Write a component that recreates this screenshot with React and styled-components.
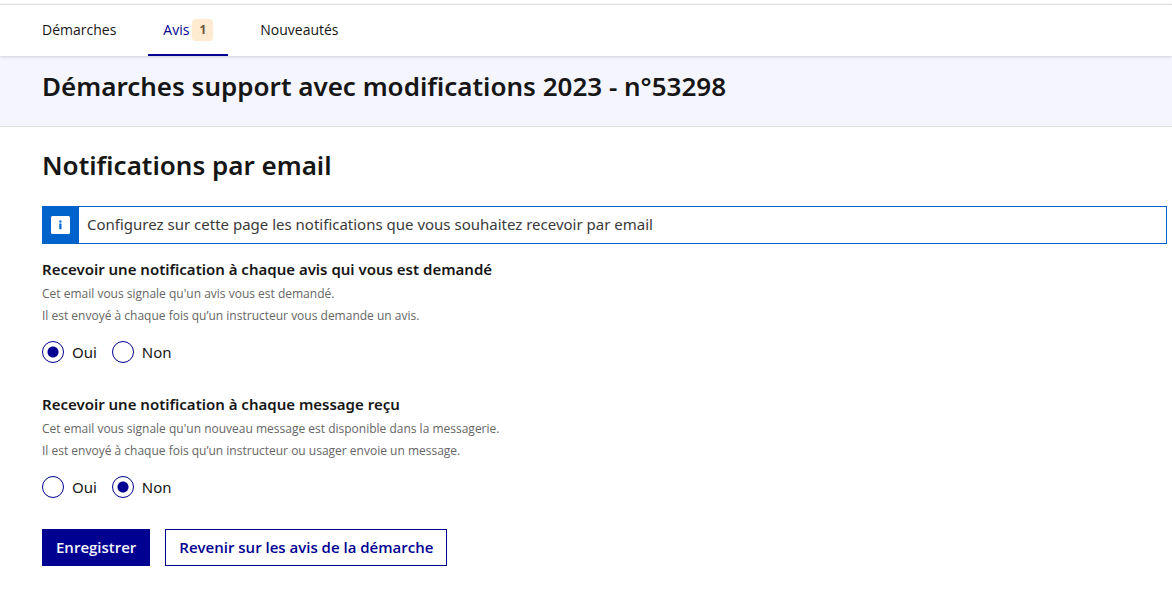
import React from "react";
import styled, { createGlobalStyle } from "styled-components";

const GlobalStyle = createGlobalStyle`
  *, *::before, *::after { box-sizing: border-box; }
  body {
    margin: 0;
    background: #fff;
    color: #161616;
    font-family: "Noto Sans", "Open Sans", sans-serif;
    font-size: 15px;
    line-height: 24px;
  }
  h1, h2, p, fieldset, ul { margin: 0; padding: 0; border: 0; }
`;

const Nav = styled.nav`
  position: relative;
  margin-top: 4px;
  border-top: 1px solid #ddd;
  background: #fff;
  box-shadow: 0 1px 3px rgba(0, 0, 18, 0.16);
`;

const NavList = styled.ul`
  display: flex;
  gap: 17px;
  padding: 0 27px;
  list-style: none;
`;

const NavLink = styled.a`
  display: flex;
  align-items: center;
  gap: 3px;
  height: 51px;
  padding: 1px 15px 0;
  border-bottom: 2px solid ${(p) => (p.$active ? "#000091" : "transparent")};
  color: ${(p) => (p.$active ? "#000091" : "#161616")};
  font-family: "Open Sans", "Noto Sans", sans-serif;
  font-size: 14px;
  text-decoration: none;
`;

const Badge = styled.span`
  padding: 0 7px;
  border-radius: 4px;
  background: #feebd0;
  color: #695240;
  font-size: 12px;
  font-weight: 700;
  line-height: 22px;
`;

const Band = styled.header`
  padding: 11px 42px 21px;
  border-bottom: 1px solid #ddd;
  background: #f5f5fe;
`;

const Title = styled.h1`
  font-size: 26px;
  font-weight: 600;
  line-height: 38px;
`;

const Main = styled.main`
  padding: 19px 5px 36px 42px;
`;

const Subtitle = styled(Title).attrs({ as: "h2" })``;

const Notice = styled.div`
  display: flex;
  margin: 22px 0 13px;
  border: 1px solid #0063cb;
`;

const NoticeIcon = styled.span`
  display: flex;
  align-items: center;
  justify-content: center;
  width: 36px;
  background: #0063cb;
`;

const NoticeText = styled.p`
  padding: 5px 8px 7px;
  color: #3a3a3a;
`;

const Group = styled.fieldset`
  min-width: 0;
  margin-bottom: 28px;
`;

const Legend = styled.legend`
  margin-bottom: 2px;
  padding: 0;
  font-weight: 600;
`;

const Hint = styled.p`
  color: #666;
  font-family: "Open Sans", "Noto Sans", sans-serif;
  font-size: 12px;
  line-height: 22px;
`;

const Options = styled.div`
  display: flex;
  gap: 15px;
  padding-top: 13px;
`;

const Option = styled.label`
  display: flex;
  align-items: center;
  gap: 8px;
`;

const Radio = styled.input`
  appearance: none;
  width: 22px;
  height: 22px;
  margin: 0;
  border: 1px solid #000091;
  border-radius: 50%;
  background: #fff;
  &:checked {
    background: radial-gradient(circle, #000091 5px, #fff 6px);
  }
`;

const Actions = styled.div`
  display: flex;
  gap: 15px;
  padding-top: 2px;
`;

const Button = styled.button`
  height: 37px;
  padding: 0 13px 2px;
  border: 1px solid #000091;
  background: ${(p) => (p.$primary ? "#000091" : "#fff")};
  color: ${(p) => (p.$primary ? "#f5f5fe" : "#000091")};
  font-family: "Open Sans", "Noto Sans", sans-serif;
  font-size: 15px;
  font-weight: 600;
`;

function InfoIcon() {
  return (
    <svg width="20" height="20" viewBox="0 0 20 20" aria-hidden="true">
      <rect x="0" y="1" width="19" height="18" rx="1.5" fill="#fff" />
      <path d="M8.3 5.5h2.2v2H8.3zM8.3 8.6h2.2v5.6H8.3z" fill="#0063cb" />
    </svg>
  );
}

function NotificationChoice({ name, title, hints, value }) {
  return (
    <Group>
      <Legend>{title}</Legend>
      {hints.map((hint) => (
        <Hint key={hint}>{hint}</Hint>
      ))}
      <Options>
        {["Oui", "Non"].map((choice) => (
          <Option key={choice}>
            <Radio type="radio" name={name} value={choice} defaultChecked={choice === value} />
            {choice}
          </Option>
        ))}
      </Options>
    </Group>
  );
}

export default function App() {
  return (
    <>
      <GlobalStyle />
      <Nav>
        <NavList>
          <li><NavLink href="#demarches">Démarches</NavLink></li>
          <li>
            <NavLink href="#avis" $active aria-current="page">
              Avis <Badge>1</Badge>
            </NavLink>
          </li>
          <li><NavLink href="#nouveautes">Nouveautés</NavLink></li>
        </NavList>
      </Nav>
      <Band>
        <Title>Démarches support avec modifications 2023 - n°53298</Title>
      </Band>
      <Main>
        <Subtitle>Notifications par email</Subtitle>
        <Notice>
          <NoticeIcon><InfoIcon /></NoticeIcon>
          <NoticeText>
            Configurez sur cette page les notifications que vous souhaitez recevoir par email
          </NoticeText>
        </Notice>
        <form onSubmit={(e) => e.preventDefault()}>
          <NotificationChoice
            name="avis"
            title="Recevoir une notification à chaque avis qui vous est demandé"
            hints={[
              "Cet email vous signale qu'un avis vous est demandé.",
              "Il est envoyé à chaque fois qu’un instructeur vous demande un avis.",
            ]}
            value="Oui"
          />
          <NotificationChoice
            name="message"
            title="Recevoir une notification à chaque message reçu"
            hints={[
              "Cet email vous signale qu'un nouveau message est disponible dans la messagerie.",
              "Il est envoyé à chaque fois qu’un instructeur ou usager envoie un message.",
            ]}
            value="Non"
          />
          <Actions>
            <Button type="submit" $primary>Enregistrer</Button>
            <Button type="button">Revenir sur les avis de la démarche</Button>
          </Actions>
        </form>
      </Main>
    </>
  );
}
